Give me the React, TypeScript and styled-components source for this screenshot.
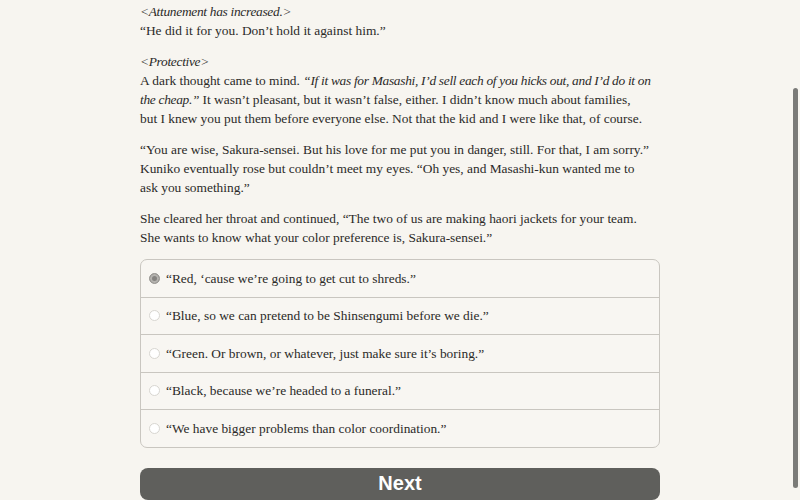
import React, { useState } from 'react';
import styled, { createGlobalStyle } from 'styled-components';

const GlobalStyle = createGlobalStyle`
    html, body {
        margin: 0;
        padding: 0;
        background: #f7f5f0;
        overflow: hidden;
    }
`;

const options = [
    '“Red, ‘cause we’re going to get cut to shreds.”',
    '“Blue, so we can pretend to be Shinsengumi before we die.”',
    '“Green. Or brown, or whatever, just make sure it’s boring.”',
    '“Black, because we’re headed to a funeral.”',
    '“We have bigger problems than color coordination.”',
];

export default function App() {
    const [selected, setSelected] = useState(0);

    return (
        <>
            <GlobalStyle />
            <Page>
                <Story>
                    <Paragraph>
                        <em>&lt;Attunement has increased.&gt;</em>
                        <br />
                        “He did it for you. Don’t hold it against him.”
                    </Paragraph>
                    <Paragraph>
                        <em>&lt;Protective&gt;</em>
                        <br />
                        A dark thought came to mind. <em>“If it was for Masashi, I’d sell each of you hicks out, and I’d do it on the cheap.”</em> It wasn’t pleasant, but it wasn’t false, either. I didn’t know much about families, but&nbsp;I knew you put them before everyone else. Not that the kid and I were like that, of course.
                    </Paragraph>
                    <Paragraph>
                        “You are wise, Sakura-sensei. But his love for me put you in danger, still. For that, I am sorry.” Kuniko eventually rose but couldn’t meet my eyes. “Oh yes, and Masashi-kun wanted me to ask you something.”
                    </Paragraph>
                    <Paragraph>
                        She cleared her throat and continued, “The two of us are making haori jackets for your team. She wants to know what your color preference is, Sakura-sensei.”
                    </Paragraph>
                </Story>

                <Choices>
                    {options.map((text, i) => (
                        <Choice key={i} onClick={() => setSelected(i)}>
                            <Radio $checked={selected === i} />
                            <span>{text}</span>
                        </Choice>
                    ))}
                </Choices>

                <NextButton>Next</NextButton>
            </Page>
            <ScrollThumb />
        </>
    );
}

const Page = styled.div`
    width: 520px;
    margin: 0 auto;
    padding-top: 2px;
    font-family: 'Liberation Serif', 'DejaVu Serif', serif;
    font-size: 13.4px;
    line-height: 19px;
    color: #2b2a28;
`;

const Story = styled.div`
    display: flex;
    flex-direction: column;
    gap: 12px;
    padding-right: 6px;

    em {
        letter-spacing: -0.3px;
    }
`;

const Paragraph = styled.p`
    margin: 0;
`;

const Choices = styled.div`
    margin-top: 12px;
    border: 1px solid #c9c6c0;
    border-radius: 7px;
    background: #f8f6f2;
    overflow: hidden;
`;

const Choice = styled.label`
    display: flex;
    align-items: center;
    gap: 6px;
    height: 36.5px;
    padding: 0 8px;
    cursor: pointer;
    & + & {
        border-top: 1px solid #c9c6c0;
    }
`;

const Radio = styled.span<{ $checked: boolean }>`
    flex: none;
    width: 9px;
    height: 9px;
    border-radius: 50%;
    border: 1px solid ${p => (p.$checked ? '#9a9894' : '#d8d6d1')};
    background: ${p => (p.$checked ? '#858380' : '#ffffff')};
    box-shadow: ${p => (p.$checked ? 'inset 0 0 0 2px #b5b3af' : 'none')};
`;

const NextButton = styled.button`
    display: block;
    width: 100%;
    height: 32px;
    margin-top: 20px;
    border: none;
    border-radius: 8px;
    background: #5f5f5c;
    color: #ffffff;
    font-family: 'Liberation Sans', Arial, sans-serif;
    font-weight: 700;
    font-size: 20px;
    cursor: pointer;
`;

const ScrollThumb = styled.div`
    position: fixed;
    top: 88px;
    right: 2px;
    width: 5px;
    height: 400px;
    border-radius: 3px;
    background: #7b7b78;
`;
